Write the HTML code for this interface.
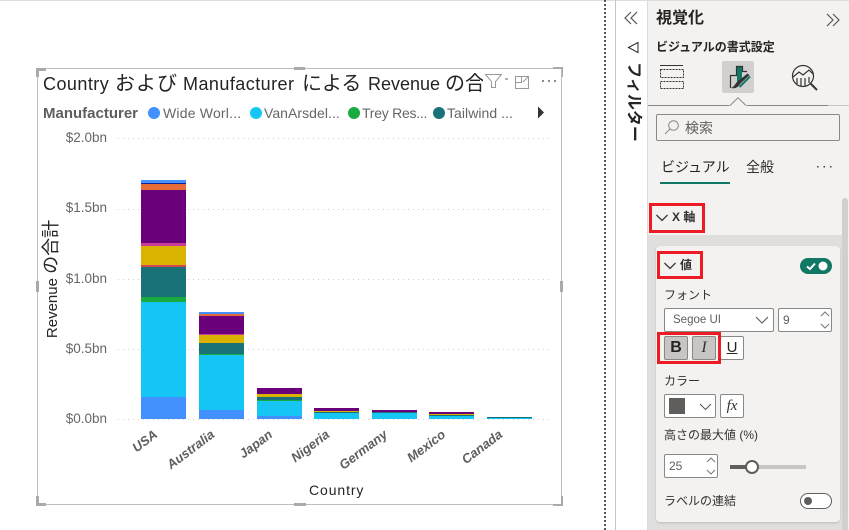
<!DOCTYPE html>
<html lang="ja"><head><meta charset="utf-8"><style>
html,body{margin:0;padding:0;background:#fff}
#p{position:relative;width:849px;height:530px;overflow:hidden;background:#fff;font-family:"Liberation Sans","Noto Sans CJK JP",sans-serif;color:#252423}
#p div,#p span.a{position:absolute;white-space:nowrap;box-sizing:border-box}
.y{font-size:13.500px;color:#666;left:59px;width:48px;text-align:right;line-height:16px}
.g{left:118px;width:435px;height:1px;background:repeating-linear-gradient(90deg,#cfcfcf 0 1px,transparent 1px 5px)}
.xl{font-size:13px;font-weight:bold;font-style:italic;color:#605e5c;transform:rotate(-37deg);transform-origin:100% 50%;text-align:right;width:80px;line-height:14px}
.leg{font-size:14px;color:#666;line-height:18px;top:104px}
.dot{width:12px;height:12px;border-radius:50%;top:107px}
.red{border:3px solid #ed1c24}
.lab{font-size:12px;color:#323130;line-height:16px}
.box{background:#fff;border:1px solid #8a8886;border-radius:2px}
.t{font-size:18px;line-height:25px;top:72px;color:#252423;letter-spacing:.45px}
.tj{font-size:20px;line-height:25px;top:72px;color:#252423}
</style></head><body><div id="p">
<div style="left:0;top:0;width:849px;height:1px;background:#ddd"></div>

<!-- visual frame -->
<div style="left:37px;top:68px;width:525px;height:437px;border:1px solid #bdbdbd"></div>
<div style="left:36px;top:68px;width:10px;height:3px;background:#aaa"></div>
<div style="left:36px;top:68px;width:3px;height:9px;background:#aaa"></div>
<div style="left:553px;top:67px;width:10px;height:2px;background:#aaa"></div>
<div style="left:562px;top:67px;width:1px;height:10px;background:#aaa"></div>
<div style="left:36px;top:496px;width:3px;height:10px;background:#aaa"></div>
<div style="left:36px;top:503px;width:10px;height:3px;background:#aaa"></div>
<div style="left:553px;top:504px;width:10px;height:2px;background:#aaa"></div>
<div style="left:561px;top:496px;width:2px;height:10px;background:#aaa"></div>
<div style="left:294px;top:67px;width:11px;height:3px;background:#aaa"></div>
<div style="left:294px;top:503px;width:12px;height:3px;background:#aaa"></div>
<div style="left:36px;top:281px;width:3px;height:11px;background:#aaa"></div>
<div style="left:560px;top:281px;width:3px;height:11px;background:#aaa"></div>

<!-- title -->
<div class="t" style="left:43px">Country</div>
<div class="tj" style="left:115px;letter-spacing:1px">および</div>
<div class="t" style="left:183px">Manufacturer</div>
<div class="tj" style="left:302px">による</div>
<div class="t" style="left:368px;letter-spacing:0">Revenue</div>
<div class="tj" style="left:445px;width:38px;height:20px;overflow:hidden">の合計</div>
<svg style="position:absolute;left:484px;top:72px" width="75" height="20" viewBox="0 0 75 20" fill="none" stroke="#999" stroke-width="1">
<path d="M1.500 2.500H17.500L11.500 9.500V15.500H7.500V9.500Z"/><path d="M21 7H24" stroke="#666"/>
<path d="M31.500 4.500H44.500V16.500H31.500ZM37.500 4.500V10.500H31.500M39 10L44 5"/>
<path d="M58 9h2M64 9h2M70 9h2" stroke="#666" stroke-width="1.500"/></svg>

<!-- legend -->
<div class="leg" style="left:43px;top:105px;font-weight:bold;color:#605e5c;font-size:15px">Manufacturer</div>
<div class="dot" style="left:148px;background:#4291ff"></div><div class="leg" style="left:163px;letter-spacing:.2px">Wide Worl...</div>
<div class="dot" style="left:250px;background:#15c6f4"></div><div class="leg" style="left:264px;letter-spacing:.05px">VanArsdel...</div>
<div class="dot" style="left:348px;background:#1aab40"></div><div class="leg" style="left:362px;letter-spacing:-.25px">Trey Res...</div>
<div class="dot" style="left:433px;background:#197278"></div><div class="leg" style="left:447px;letter-spacing:.05px">Tailwind ...</div>
<svg style="position:absolute;left:537px;top:106px" width="8" height="13"><path d="M1 0.500L7 6.500L1 12.500Z" fill="#333"/></svg>

<!-- axis -->
<div class="y" style="top:130px">$2.0bn</div><div class="g" style="top:138px"></div>
<div class="y" style="top:200px">$1.5bn</div><div class="g" style="top:209px"></div>
<div class="y" style="top:271px">$1.0bn</div><div class="g" style="top:279px"></div>
<div class="y" style="top:341px">$0.5bn</div><div class="g" style="top:349px"></div>
<div class="y" style="top:411px">$0.0bn</div><div class="g" style="top:419px"></div>
<div style="left:52px;top:279px;width:0;height:0"><span class="a" style="display:block;transform:translate(-50%,-50%) rotate(-90deg);font-size:15px;line-height:18px;color:#252423;white-space:nowrap">Revenue <span style="font-size:18px">の合計</span></span></div>

<!-- bars -->
<svg style="position:absolute;left:0;top:0" width="600" height="430" shape-rendering="crispEdges">
<g>
<rect x="141" y="180" width="45" height="3" fill="#4291ff"/><rect x="141" y="183" width="45" height="1" fill="#12239e"/><rect x="141" y="184" width="45" height="6" fill="#e66c37"/><rect x="141" y="190" width="45" height="53" fill="#6b007b"/><rect x="141" y="243" width="45" height="3" fill="#c83d95"/><rect x="141" y="246" width="45" height="19" fill="#d9b300"/><rect x="141" y="265" width="45" height="2" fill="#d64550"/><rect x="141" y="267" width="45" height="30" fill="#197278"/><rect x="141" y="297" width="45" height="5" fill="#1aab40"/><rect x="141" y="302" width="45" height="95" fill="#15c6f4"/><rect x="141" y="397" width="45" height="22" fill="#4291ff"/>
<rect x="199" y="312" width="45" height="2" fill="#4291ff"/><rect x="199" y="314" width="45" height="2" fill="#e66c37"/><rect x="199" y="316" width="45" height="18" fill="#6b007b"/><rect x="199" y="334" width="45" height="1" fill="#c83d95"/><rect x="199" y="335" width="45" height="8" fill="#d9b300"/><rect x="199" y="343" width="45" height="11" fill="#197278"/><rect x="199" y="354" width="45" height="1" fill="#1aab40"/><rect x="199" y="355" width="45" height="55" fill="#15c6f4"/><rect x="199" y="410" width="45" height="9" fill="#4291ff"/>
<rect x="257" y="388" width="45" height="6" fill="#6b007b"/><rect x="257" y="394" width="45" height="3" fill="#d9b300"/><rect x="257" y="397" width="45" height="3" fill="#197278"/><rect x="257" y="400" width="45" height="1" fill="#1aab40"/><rect x="257" y="401" width="45" height="15" fill="#15c6f4"/><rect x="257" y="416" width="45" height="3" fill="#4291ff"/>
<rect x="314" y="408" width="45" height="3" fill="#6b007b"/><rect x="314" y="411" width="45" height="1" fill="#d9b300"/><rect x="314" y="412" width="45" height="1" fill="#197278"/><rect x="314" y="413" width="45" height="6" fill="#15c6f4"/>
<rect x="372" y="410" width="45" height="2" fill="#6b007b"/><rect x="372" y="412" width="45" height="1" fill="#197278"/><rect x="372" y="413" width="45" height="6" fill="#15c6f4"/>
<rect x="429" y="412" width="45" height="2" fill="#6b007b"/><rect x="429" y="414" width="45" height="1" fill="#d9b300"/><rect x="429" y="415" width="45" height="1" fill="#197278"/><rect x="429" y="416" width="45" height="3" fill="#15c6f4"/>
<rect x="487" y="417" width="45" height="1" fill="#197278"/><rect x="487" y="418" width="45" height="1" fill="#15c6f4"/>
</g></svg>

<!-- x labels -->
<div class="xl" style="left:76px;top:426px">USA</div>
<div class="xl" style="left:133px;top:426px">Australia</div>
<div class="xl" style="left:191px;top:426px">Japan</div>
<div class="xl" style="left:248px;top:426px">Nigeria</div>
<div class="xl" style="left:306px;top:426px">Germany</div>
<div class="xl" style="left:364px;top:426px">Mexico</div>
<div class="xl" style="left:421px;top:426px">Canada</div>
<div style="left:309px;top:481px;font-size:14px;line-height:18px;color:#252423;letter-spacing:.9px">Country</div>

<!-- dotted divider -->
<div style="left:604px;top:0;width:0;height:530px;border-left:2px dotted #555"></div>
<div style="left:615px;top:0;width:1px;height:530px;background:#c8c6c4"></div>

<!-- filter column -->
<svg style="position:absolute;left:624px;top:10px" width="14" height="16" fill="none" stroke="#555" stroke-width="1.200"><path d="M7 2L1 8L7 14M13 2L7 8L13 14"/></svg>
<svg style="position:absolute;left:627px;top:41px" width="13" height="13" fill="none" stroke="#252423" stroke-width="1"><path d="M1.500 6.500L11 1.500V11.500Z"/></svg>
<div style="left:633px;top:102px;width:0;height:0"><span class="a" style="display:block;transform:translate(-50%,-50%) rotate(90deg);font-size:16px;font-weight:bold;line-height:18px;color:#252423;white-space:nowrap">フィルター</span></div>

<!-- right panel -->
<div style="left:647px;top:1px;width:202px;height:529px;background:#f3f2f1;border-left:1px solid #dedcda"></div>
<div style="left:656px;top:8px;font-size:16px;font-weight:bold;line-height:21px;color:#252423">視覚化</div>
<svg style="position:absolute;left:826px;top:12px" width="14" height="16" fill="none" stroke="#555" stroke-width="1.200"><path d="M1 2L7 8L1 14M7 2L13 8L7 14"/></svg>
<div style="left:656px;top:39px;font-size:12px;font-weight:bold;line-height:17px;color:#252423">ビジュアルの書式設定</div>

<!-- tab icons -->
<svg style="position:absolute;left:659px;top:64px" width="26" height="26" fill="none" stroke="#333" stroke-width="1"><path d="M1 1.500H24"/><path d="M1.500 5.500H24.500V13.500H1.500ZM1.500 17.500H24.500V24.500H1.500Z" stroke-dasharray="2 1"/></svg>
<div style="left:722px;top:61px;width:32px;height:32px;background:#d2d0ce;border-radius:2px"></div>
<svg style="position:absolute;left:726px;top:64px" width="26" height="26"><path d="M11 3H16V15L11 20Z" fill="#117865"/><path d="M4.500 24V11.500H10.500V2.500H16.500V7.500H21" fill="none" stroke="#333" stroke-width="1.200"/><path d="M23.500 11L14 20C12 23.500 9 25 5 24C8 23 9 20 11 18L21.500 9.500Z" fill="#333"/><path d="M13.500 23L24 12.500" stroke="#117865" stroke-width="2"/></svg>
<svg style="position:absolute;left:791px;top:64px" width="28" height="28" fill="none" stroke="#333" stroke-width="1.200"><circle cx="12" cy="12" r="10.500"/><path d="M2 13L8 8L12 11L18 6L22 10" /><path d="M6 14V20M10 14V22M14 14V22M18 13V19"/><path d="M19 19L26 26" stroke-width="2"/></svg>
<div style="left:648px;top:105px;width:180px;height:1px;background:#8a8886"></div>
<div style="left:828px;top:105px;width:21px;height:1px;background:#c8c6c4"></div>
<svg style="position:absolute;left:729px;top:97px" width="18" height="10"><path d="M0 8.500H1L9 0.800L17 8.500H18V10H0Z" fill="#f3f2f1"/><path d="M1 8.500L9 0.800L17 8.500" fill="none" stroke="#8a8886"/></svg>

<!-- search -->
<div class="box" style="left:656px;top:114px;width:184px;height:27px;background:#f3f2f1"></div>
<svg style="position:absolute;left:663px;top:119px" width="17" height="17" fill="none" stroke="#888" stroke-width="1"><circle cx="10.500" cy="6.500" r="4.800"/><path d="M7 10L2 15"/></svg>
<div style="left:685px;top:119px;font-size:14px;line-height:18px;color:#605e5c">検索</div>

<!-- tabs -->
<div style="left:661px;top:157px;font-size:14px;line-height:20px;color:#252423">ビジュアル</div>
<div style="left:660px;top:182px;width:70px;height:2px;background:#117865"></div>
<div style="left:746px;top:157px;font-size:14px;line-height:20px;color:#323130">全般</div>
<svg style="position:absolute;left:816px;top:165px" width="18" height="4" fill="#444"><rect x="1" y="1" width="1.500" height="1.500"/><rect x="7.500" y="1" width="1.500" height="1.500"/><rect x="14" y="1" width="1.500" height="1.500"/></svg>

<!-- scrollbar -->
<div style="left:842px;top:198px;width:6px;height:332px;background:#d2d0ce;border-radius:3px 3px 0 0"></div>

<!-- X axis section -->
<svg style="position:absolute;left:655px;top:213px" width="14" height="10" fill="none" stroke="#333" stroke-width="1.300"><path d="M1.500 2L7 7.500L12.500 2"/></svg>
<div style="left:672px;top:209px;font-size:12px;line-height:17px;color:#323130;font-weight:bold">X 軸</div>
<div class="red" style="left:649px;top:203px;width:56px;height:30px"></div>

<!-- card -->
<div style="left:648px;top:235px;width:194px;height:295px;background:#e1dfdd"></div>
<div style="left:656px;top:246px;width:184px;height:276px;background:#f3f2f1;border-radius:4px;box-shadow:0 1px 2px #bbb"></div>

<svg style="position:absolute;left:663px;top:261px" width="14" height="10" fill="none" stroke="#333" stroke-width="1.300"><path d="M1.500 2L7 7.500L12.500 2"/></svg>
<div style="left:680px;top:257px;font-size:12px;line-height:17px;font-weight:bold;color:#323130">値</div>
<div class="red" style="left:657px;top:251px;width:46px;height:28px"></div>
<div style="left:800px;top:258px;width:32px;height:16px;border-radius:8px;background:#117865"></div>
<svg style="position:absolute;left:800px;top:258px" width="32" height="16"><path d="M7 8.500L10 11L15 5.500" fill="none" stroke="#fff" stroke-width="2"/><circle cx="23" cy="8" r="4.500" fill="#fff"/></svg>

<div class="lab" style="left:664px;top:287px">フォント</div>
<div class="box" style="left:664px;top:308px;width:110px;height:24px"></div>
<div style="left:673px;top:313px;font-size:11.500px;line-height:15px;color:#605e5c">Segoe UI</div>
<svg style="position:absolute;left:755px;top:316px" width="14" height="9" fill="none" stroke="#555" stroke-width="1"><path d="M1 1L7 7L13 1"/></svg>
<div class="box" style="left:778px;top:308px;width:54px;height:24px"></div>
<div style="left:783px;top:313px;font-size:12px;line-height:15px;color:#605e5c">9</div>
<svg style="position:absolute;left:820px;top:311px" width="10" height="18" fill="none" stroke="#777" stroke-width="1"><path d="M1 5L5 1L9 5M1 13L5 17L9 13"/></svg>

<div style="left:664px;top:336px;width:24px;height:24px;background:#c8c6c4;border:1px solid #8a8886;border-radius:2px;font-size:16px;font-weight:bold;line-height:22px;text-align:center;color:#252423">B</div>
<div style="left:692px;top:336px;width:24px;height:24px;background:#c8c6c4;border:1px solid #8a8886;border-radius:2px;font-family:'Liberation Serif',serif;font-size:16px;font-style:italic;line-height:22px;text-align:center;color:#323130">I</div>
<div class="box" style="left:720px;top:336px;width:24px;height:24px;font-size:15px;line-height:22px;text-align:center;text-decoration:underline;color:#252423">U</div>
<div class="red" style="left:657px;top:332px;width:64px;height:32px"></div>

<div class="lab" style="left:664px;top:373px">カラー</div>
<div class="box" style="left:664px;top:394px;width:52px;height:24px"></div>
<div style="left:669px;top:398px;width:16px;height:16px;background:#605e5c"></div>
<svg style="position:absolute;left:699px;top:403px" width="13" height="8" fill="none" stroke="#555" stroke-width="1"><path d="M1 1L6.500 6.500L12 1"/></svg>
<div class="box" style="left:720px;top:394px;width:24px;height:24px;font-family:'Liberation Serif',serif;font-size:15px;font-style:italic;line-height:22px;text-align:center;color:#323130">fx</div>

<div class="lab" style="left:664px;top:427px">高さの最大値 (%)</div>
<div class="box" style="left:664px;top:454px;width:54px;height:24px"></div>
<div style="left:669px;top:459px;font-size:12px;line-height:15px;color:#605e5c">25</div>
<svg style="position:absolute;left:706px;top:457px" width="10" height="18" fill="none" stroke="#777" stroke-width="1"><path d="M1 5L5 1L9 5M1 13L5 17L9 13"/></svg>
<div style="left:730px;top:465px;width:76px;height:4px;background:#c8c6c4"></div>
<div style="left:730px;top:465px;width:20px;height:4px;background:#605e5c"></div>
<div style="left:745px;top:460px;width:14px;height:14px;border-radius:50%;background:#fff;border:2px solid #605e5c"></div>

<div class="lab" style="left:664px;top:493px">ラベルの連結</div>
<div style="left:800px;top:493px;width:32px;height:16px;border-radius:8px;background:#fff;border:1px solid #605e5c"></div>
<div style="left:804px;top:497px;width:8px;height:8px;border-radius:50%;background:#605e5c"></div>
</div></body></html>
